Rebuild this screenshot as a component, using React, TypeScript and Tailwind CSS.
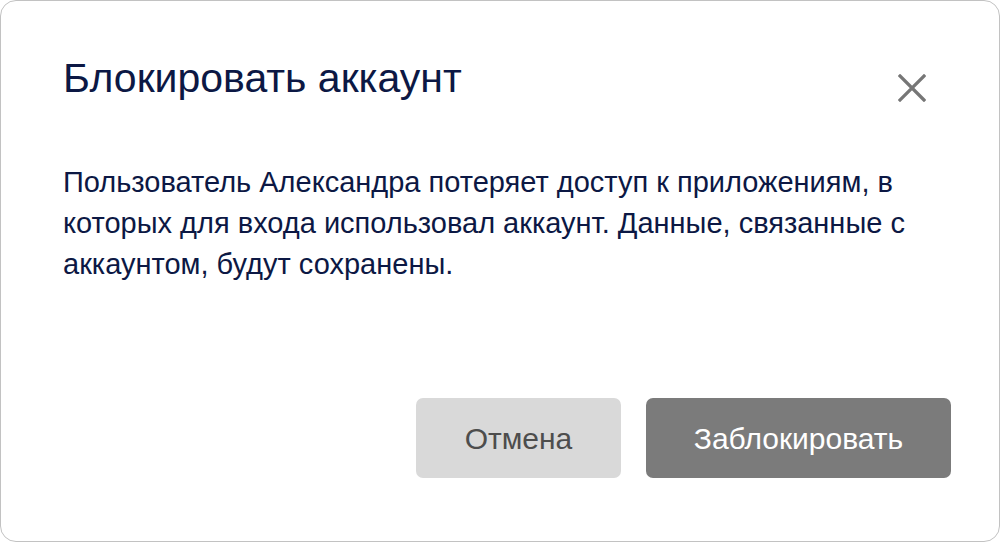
export default function App() {
  return (
    <div className="flex h-[542px] w-[1000px] flex-col rounded-[16px] border border-[#c2c2c2] bg-white pb-[63px] pl-[62px] pr-[48px] font-['Liberation_Sans',Arial,sans-serif] text-[#0c1844]">
      {/* Header */}
      <div className="flex items-start justify-between pt-[57px]">
        <h2 className="text-[41px] leading-none font-normal">Блокировать аккаунт</h2>
        <button type="button" aria-label="Закрыть" className="mr-[25px] mt-[16px] text-[#767676]">
          <svg width="28" height="28" viewBox="0 0 28 28" fill="none">
            <path d="M2 2L26 26M26 2L2 26" stroke="currentColor" strokeWidth="3.2" strokeLinecap="square" />
          </svg>
        </button>
      </div>

      {/* Body */}
      <p className="mt-[60px] pr-[20px] text-[29px] leading-[41px]">
        Пользователь Александра потеряет доступ к приложениям, в которых для входа использовал аккаунт. Данные, связанные с
        аккаунтом, будут сохранены.
      </p>

      {/* Actions */}
      <div className="mt-auto flex justify-end gap-[25px]">
        <button
          type="button"
          className="h-[80px] w-[205px] rounded-[7px] bg-[#d9d9d9] text-[30px] text-[#4d4d4d]"
        >
          Отмена
        </button>
        <button
          type="button"
          className="h-[80px] w-[305px] rounded-[7px] bg-[#7b7b7b] text-[30px] text-white"
        >
          Заблокировать
        </button>
      </div>
    </div>
  );
}
